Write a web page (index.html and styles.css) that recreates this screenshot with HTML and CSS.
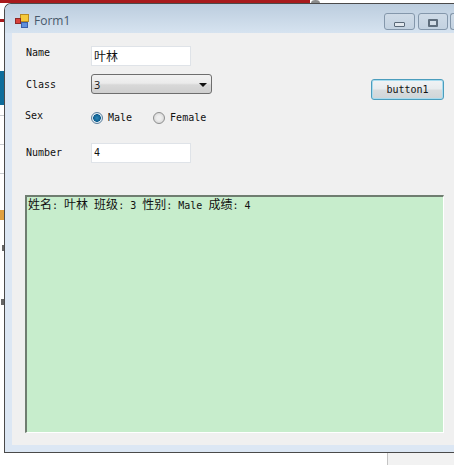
FILE: index.html
```html
<!DOCTYPE html>
<html lang="en">

<head>
    <meta charset="UTF-8">
    <title>Form1</title>
    <link rel="stylesheet" href="styles.css">
</head>

<body>
    <div class="backdrop">
        <span class="bg-red"></span>
        <span class="bg-bump"></span>
        <span class="bg-red-left"></span>
        <span class="bg-teal"></span>
        <div class="bg-rules">
            <span class="bg-rule"></span>
            <span class="bg-rule"></span>
            <span class="bg-rule"></span>
        </div>
        <span class="bg-icon"></span>
        <span class="bg-mark bg-mark-a"></span>
        <span class="bg-mark bg-mark-b"></span>
        <span class="bg-line-v"></span>
        <span class="bg-panel"></span>
    </div>

    <div class="window">
        <div class="titlebar">
            <svg class="app-icon" viewBox="0 0 14 14">
                <rect x="5.5" y="0.5" width="8" height="7" fill="#f5c93a" stroke="#b98a20" />
                <rect x="0.5" y="4.5" width="5" height="5" fill="#d8413a" stroke="#8e2a28" />
                <rect x="6.5" y="8.5" width="6" height="5" fill="#5f8fdc" stroke="#3a5fa8" />
            </svg>
            <span class="title">Form1</span>
            <div class="caption-btns">
                <div class="caption-btn caption-min"><span class="min-glyph"></span></div>
                <div class="caption-btn"><span class="max-glyph"></span></div>
                <div class="caption-btn caption-close"></div>
            </div>
        </div>

        <div class="client">
            <div class="top">
                <div class="fields">
                    <div class="row row-name">
                        <label class="label">Name</label>
                        <div class="input input-cjk">叶林</div>
                    </div>
                    <div class="row row-class">
                        <label class="label">Class</label>
                        <div class="select">
                            <span>3</span>
                            <span class="arrow"></span>
                        </div>
                    </div>
                    <div class="row row-sex">
                        <label class="label label-sex">Sex</label>
                        <div class="radios">
                            <span class="radio radio-on"></span>
                            <span class="radio-text">Male</span>
                            <span class="radio"></span>
                            <span class="radio-text">Female</span>
                        </div>
                    </div>
                    <div class="row row-number">
                        <label class="label">Number</label>
                        <div class="input">4</div>
                    </div>
                </div>
                <div class="button">button1</div>
            </div>

            <div class="output"><span class="cjk">姓名</span>: <span class="cjk">叶林</span> <span class="cjk">班级</span>: 3 <span class="cjk">性别</span>: Male <span class="cjk">成绩</span>: 4</div>
        </div>
    </div>
</body>

</html>
```

FILE: styles.css
```css
* {
    box-sizing: border-box;
}

body {
    background-color: #fff;
    font-family: "DejaVu Sans Mono", "Noto Sans CJK SC", monospace;
    font-size: 10px;
    height: 465px;
    margin: 0;
    overflow: hidden;
    padding: 3px 0 0 4px;
    color: #111;
}

/* bits of whatever is behind the window */
.bg-red {
    background: #a81a1c;
    height: 3px;
    left: 0;
    position: absolute;
    top: 0;
    width: 310px;
}

.bg-bump {
    background: #8a8a8a;
    border-radius: 50%;
    height: 6px;
    left: 311px;
    position: absolute;
    top: 0;
    width: 9px;
}

.bg-red-left {
    background: #a81a1c;
    height: 3px;
    left: 0;
    position: absolute;
    top: 19px;
    width: 4px;
}

.bg-teal {
    background: #0c6c9c;
    height: 34px;
    left: 0;
    position: absolute;
    top: 71px;
    width: 4px;
}

.bg-rules {
    display: flex;
    flex-direction: column;
    gap: 28px;
    left: 0;
    position: absolute;
    top: 115px;
    width: 4px;
}

.bg-rule {
    background: #c8ccd0;
    height: 1px;
}

.bg-icon {
    background: #e0a040;
    height: 10px;
    left: 0;
    position: absolute;
    top: 210px;
    width: 4px;
}

.bg-mark {
    background: #666;
    height: 6px;
    left: 2px;
    position: absolute;
    width: 2px;
}

.bg-mark-a {
    top: 245px;
}

.bg-mark-b {
    left: 1px;
    top: 299px;
    width: 3px;
}

.bg-line-v {
    background: #c4c4c4;
    height: 13px;
    left: 387px;
    position: absolute;
    top: 452px;
    width: 1px;
}

.bg-panel {
    background: #f2f2f2;
    height: 13px;
    left: 388px;
    position: absolute;
    top: 452px;
    width: 66px;
}

.window {
    background: #dce7f4;
    border: 1px solid #4a4a4a;
    border-right: 0;
    border-top-left-radius: 7px;
    display: flex;
    flex-direction: column;
    height: 450px;
    overflow: hidden;
    padding: 0 0 7px 7px;
    position: relative;
    width: 450px;
}

.titlebar {
    align-items: center;
    background: linear-gradient(to bottom, #bccdde, #d6e3f0);
    display: flex;
    flex: none;
    height: 29px;
    margin-left: -7px;
    padding: 4px 0 0 10px;
}

.app-icon {
    height: 14px;
    width: 14px;
}

.title {
    color: #47586a;
    font-family: "Open Sans", sans-serif;
    font-size: 12px;
    margin-left: 5px;
}

.caption-btns {
    align-self: flex-start;
    display: flex;
    gap: 3px;
    margin-left: auto;
    margin-top: 5px;
}

.caption-btn {
    align-items: center;
    background: linear-gradient(to bottom, #cfdbe7, #c3d2e1);
    border: 1px solid #8497ab;
    border-radius: 3px;
    display: flex;
    height: 17px;
    justify-content: center;
    width: 30px;
}

.caption-min {
    width: 31px;
}

.caption-close {
    border-right: 0;
    border-radius: 3px 0 0 3px;
    margin-left: -1px;
    width: 4px;
}

.min-glyph {
    background: #e2e8ee;
    border: 1px solid #5a6978;
    border-radius: 1px;
    height: 5px;
    margin-top: 5px;
    width: 11px;
}

.max-glyph {
    background: #d3dde7;
    border: 2px solid #5f6e7d;
    border-radius: 1px;
    height: 8px;
    margin-top: 3px;
    width: 10px;
}

.client {
    background: #f0f0f0;
    flex: 1;
    padding: 13px 10px 0 13px;
}

.top {
    display: flex;
    height: 149px;
    justify-content: space-between;
}

.row {
    align-items: flex-start;
    display: flex;
}

.label {
    line-height: 12px;
    margin-left: 1px;
    padding-top: 1px;
    width: 65px;
}

.row-class {
    margin-top: 8px;
}

.row-class .label {
    padding-top: 5px;
}

.row-sex {
    margin-top: 16px;
}

.row-number {
    margin-top: 19px;
}

.row-number .label {
    padding-top: 4px;
}

.label-sex {
    margin-left: 0;
    margin-top: -1px;
    width: 66px;
}

.input {
    background: #fff;
    border: 1px solid #dfe3e8;
    font-size: 10px;
    height: 20px;
    line-height: 18px;
    padding-left: 2px;
    width: 100px;
}

.input-cjk {
    font-family: "Noto Sans CJK SC", sans-serif;
    font-size: 12px;
}

.select {
    align-items: center;
    background: linear-gradient(to bottom, #f2f2f2 0%, #ebebeb 45%, #d8d8d8 55%, #cfcfcf 100%);
    border: 1px solid #6e6e6e;
    border-radius: 3px;
    display: flex;
    font-family: "Open Sans", sans-serif;
    font-size: 11px;
    height: 20px;
    justify-content: space-between;
    padding: 0 4px 0 2px;
    width: 121px;
}

.arrow {
    border-left: 4px solid transparent;
    border-right: 4px solid transparent;
    border-top: 4px solid #111;
    height: 0;
    margin-top: 2px;
    width: 0;
}

.radios {
    align-items: center;
    display: flex;
    height: 13px;
    margin-top: 1px;
}

.radio {
    background: radial-gradient(circle, #eee 30%, #ccc 100%);
    border: 1px solid #8e8f8f;
    border-radius: 50%;
    height: 12px;
    width: 12px;
}

.radio-on {
    background: radial-gradient(circle, #2a86b8 0, #0f5f90 50%, #dfeaf2 58%, #dfeaf2 100%);
    border-color: #5c7f9c;
}

.radio-text {
    margin-left: 5px;
    margin-right: 21px;
}

.button {
    background: linear-gradient(to bottom, #f0f3f5 0%, #e8ecee 45%, #d8dcde 55%, #cfd5d8 100%);
    border: 1px solid #4b9dbd;
    border-radius: 3px;
    box-shadow: inset 0 0 0 1px #a8dcef;
    height: 21px;
    line-height: 19px;
    margin-top: 33px;
    text-align: center;
    width: 73px;
}

.output {
    background: #c7edcc;
    border-bottom: 1px solid #fff;
    border-left: 2px solid #6f7d70;
    border-right: 1px solid #fff;
    border-top: 2px solid #6f7d70;
    font-size: 10px;
    height: 238px;
    line-height: 14px;
    padding-left: 1px;
}

.cjk {
    font-family: "Noto Sans CJK SC", sans-serif;
    font-size: 12px;
}
```
